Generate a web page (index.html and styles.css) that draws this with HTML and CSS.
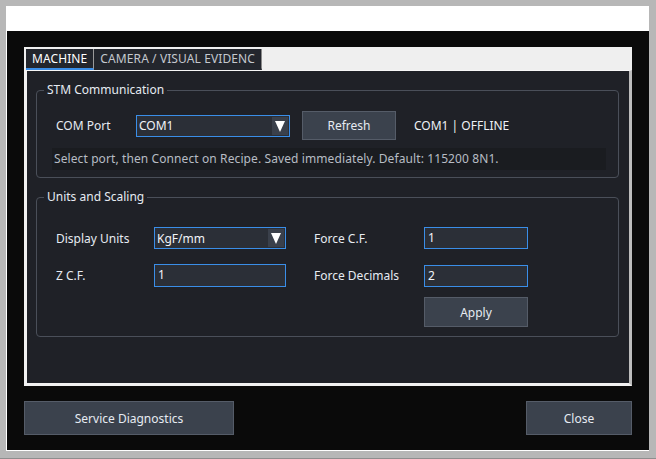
FILE: index.html
```html
<!DOCTYPE html>
<html lang="en">
<head>
  <meta charset="UTF-8" />
  <link rel="stylesheet" href="styles.css">
</head>
<body>

<div class="frame">
  <div class="window">
    <div class="caption"></div>

    <div class="client">

      <!-- Tab widget -->
      <div class="tabs">
        <div class="tab-bar">
          <div class="tab active">MACHINE</div>
          <div class="tab">CAMERA / VISUAL EVIDENC</div>
        </div>

        <div class="pane">

          <fieldset class="group">
            <legend>STM Communication</legend>
            <div class="group-body stm-body">
              <div class="port-row">
                <span class="label port-label">COM Port</span>
                <div class="combo port-combo">
                  <span class="combo-value">COM1</span>
                  <span class="combo-arrow"><svg width="10" height="12" viewBox="0 0 10 12"><path d="M0 1h10L5 12z" fill="#fff"/></svg></span>
                </div>
                <button class="btn refresh-btn">Refresh</button>
                <span class="status">COM1 | OFFLINE</span>
              </div>
              <div class="info">Select port, then Connect on Recipe. Saved immediately. Default: 115200 8N1.</div>
            </div>
          </fieldset>

          <fieldset class="group">
            <legend>Units and Scaling</legend>
            <div class="group-body units-grid">
              <span class="label">Display Units</span>
              <div class="combo units-combo">
                <span class="combo-value">KgF/mm</span>
                <span class="combo-arrow"><svg width="10" height="12" viewBox="0 0 10 12"><path d="M0 1h10L5 12z" fill="#fff"/></svg></span>
              </div>
              <span class="label">Force C.F.</span>
              <div class="field">1</div>

              <span class="label">Z C.F.</span>
              <div class="field zcf-field">1</div>
              <span class="label">Force Decimals</span>
              <div class="field">2</div>

              <button class="btn apply-btn">Apply</button>
            </div>
          </fieldset>

        </div>
      </div>

      <!-- Bottom buttons -->
      <div class="footer">
        <button class="btn service-btn">Service Diagnostics</button>
        <button class="btn close-btn">Close</button>
      </div>

    </div>
  </div>
</div>

</body>
</html>
```

FILE: styles.css
```css
/* Page setup */
html, body {
  margin: 0;
  padding: 0;
  width: 656px;
  height: 459px;
  overflow: hidden;
  font-family: 'Noto Sans', 'Open Sans', sans-serif;
  font-size: 12px;
  color: #e6ebf2;
}

/* Outer window frame */
.frame {
  box-sizing: border-box;
  width: 656px;
  height: 459px;
  background: #b7b7b7;
  padding: 6px 7px 7px 6px;
  border-bottom: 1px solid #8e8e8e;
}

.window {
  box-sizing: border-box;
  height: 100%;
  border-left: 1px solid #fff;
  border-top: 1px solid #fff;
  border-bottom: 1px solid #fff;
  display: flex;
  flex-direction: column;
}

.caption {
  height: 24px;
  background: #fff;
}

.client {
  flex: 1;
  background: #0a0a0a;
  padding: 16px 17px 15px 17px;
  display: flex;
  flex-direction: column;
}

/* Tab widget */
.tabs {
  display: flex;
  flex-direction: column;
  width: 608px;
}

.tab-bar {
  height: 23px;
  background: #efefef;
  display: flex;
  align-items: flex-end;
  padding-left: 2px;
  box-sizing: border-box;
}

.tab {
  height: 21px;
  box-sizing: border-box;
  padding: 0 6px;
  display: flex;
  align-items: center;
  background: #23262d;
  color: #c4c8cf;
  border-right: 1px solid #8a8a8a;
  border-bottom: 2px solid #23262d;
  letter-spacing: 0.1px;
}

.tab.active {
  color: #ffffff;
  border-bottom: 2px solid #3a8ee8;
  border-right: 1px solid #9a9a9a;
}

.pane {
  height: 316px;
  box-sizing: border-box;
  background: #1f2127;
  border-left: 3px solid #f2f2f2;
  border-top: 1px solid #f7f7f7;
  border-bottom: 3px solid #f2f2f2;
  border-right: 3px solid #bdbdbd;
  padding: 11px 10px 0 9px;
  display: flex;
  flex-direction: column;
  gap: 11px;
}

/* Group boxes */
.group {
  margin: 0;
  padding: 0;
  border: 1px solid #4a4f59;
  border-radius: 4px;
  min-width: 0;
}

.group legend {
  margin-left: 7px;
  padding: 0 3px;
  line-height: 16px;
  color: #e6ebf2;
}

.stm-body {
  padding: 13px 12px 7px 15px;
}

.port-row {
  display: flex;
  align-items: center;
  padding-left: 4px;
  height: 29px;
}

.port-label {
  width: 80px;
}

.combo {
  box-sizing: border-box;
  height: 22px;
  background: #2b2f37;
  border: 1px solid #3a8ee8;
  display: flex;
  align-items: center;
  justify-content: space-between;
  padding: 0 1px 0 2px;
  color: #f2f4f7;
}

.combo-arrow {
  width: 16px;
  height: 18px;
  background: #3a404b;
  display: flex;
  align-items: center;
  justify-content: center;
}

.port-combo {
  width: 154px;
}

.btn {
  box-sizing: border-box;
  font-family: inherit;
  font-size: 12px;
  color: #e6ebf2;
  background: #3b424d;
  border: 1px solid #555c68;
  padding: 0;
}

.refresh-btn {
  width: 94px;
  height: 29px;
  margin-left: 12px;
}

.status {
  margin-left: 18px;
  color: #eef1f5;
}

.info {
  margin-top: 8px;
  height: 22px;
  line-height: 22px;
  background: #1a1c20;
  color: #b7bcc4;
  padding-left: 2px;
  letter-spacing: 0.1px;
}

.units-grid {
  padding: 22px 0 4px 19px;
  display: grid;
  grid-template-columns: 98px 160px 110px 104px;
  grid-template-rows: 22px 23px 30px;
  row-gap: 15px;
  align-items: center;
}

.units-combo {
  width: 132px;
}

.field {
  box-sizing: border-box;
  height: 22px;
  width: 104px;
  background: #2b2f37;
  border: 1px solid #3a8ee8;
  padding-left: 3px;
  line-height: 20px;
  color: #f2f4f7;
}

.zcf-field {
  width: 132px;
  height: 23px;
}

.apply-btn {
  grid-column: 4;
  grid-row: 3;
  align-self: start;
  width: 104px;
  height: 30px;
  margin-top: -5px;
}

/* Bottom buttons */
.footer {
  margin-top: 15px;
  display: flex;
  justify-content: space-between;
  width: 608px;
}

.service-btn {
  width: 210px;
  height: 34px;
}

.close-btn {
  width: 106px;
  height: 34px;
}
```
